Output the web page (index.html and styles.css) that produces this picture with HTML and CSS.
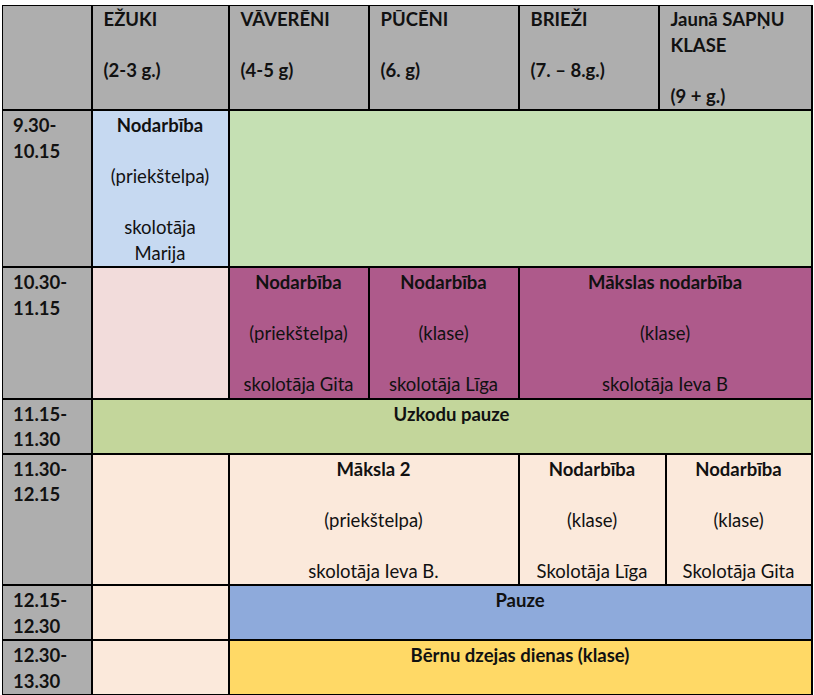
FILE: index.html
```html
<!DOCTYPE html>
<html lang="lv">
<head>
<meta charset="utf-8">
<title>Nodarbību grafiks</title>
<link rel="stylesheet" href="styles.css">
</head>
<body>
<table class="sched">
  <colgroup>
    <col class="c-time">
    <col class="c-ezuki">
    <col class="c-vav">
    <col class="c-puc">
    <col class="c-brie">
    <col class="c-gap">
    <col class="c-jauna">
  </colgroup>
  <tr class="head">
    <td class="grey"></td>
    <td class="grey hd"><p>EŽUKI</p><p class="sp">(2-3 g.)</p></td>
    <td class="grey hd"><p>VĀVERĒNI</p><p class="sp">(4-5 g)</p></td>
    <td class="grey hd"><p>PŪCĒNI</p><p class="sp">(6. g)</p></td>
    <td class="grey hd"><p>BRIEŽI</p><p class="sp">(7. – 8.g.)</p></td>
    <td class="grey hd" colspan="2"><p>Jaunā SAPŅU<br>KLASE</p><p class="sp">(9 + g.)</p></td>
  </tr>
  <tr>
    <td class="grey time">9.30-<br>10.15</td>
    <td class="blue act"><p class="b">Nodarbība</p><p class="sp">(priekštelpa)</p><p class="sp">skolotāja<br>Marija</p></td>
    <td class="green" colspan="5"></td>
  </tr>
  <tr>
    <td class="grey time">10.30-<br>11.15</td>
    <td class="pink"></td>
    <td class="purple act"><p class="b">Nodarbība</p><p class="sp">(priekštelpa)</p><p class="sp">skolotāja Gita</p></td>
    <td class="purple act"><p class="b">Nodarbība</p><p class="sp">(klase)</p><p class="sp">skolotāja Līga</p></td>
    <td class="purple act" colspan="3"><p class="b">Mākslas nodarbība</p><p class="sp">(klase)</p><p class="sp">skolotāja Ieva B</p></td>
  </tr>
  <tr>
    <td class="grey time">11.15-<br>11.30</td>
    <td class="olive act" colspan="6"><p class="b">Uzkodu pauze</p></td>
  </tr>
  <tr>
    <td class="grey time">11.30-<br>12.15</td>
    <td class="peach"></td>
    <td class="peach act" colspan="2"><p class="b">Māksla 2</p><p class="sp">(priekštelpa)</p><p class="sp">skolotāja Ieva B.</p></td>
    <td class="peach act" colspan="2"><p class="b">Nodarbība</p><p class="sp">(klase)</p><p class="sp">Skolotāja Līga</p></td>
    <td class="peach act"><p class="b">Nodarbība</p><p class="sp">(klase)</p><p class="sp">Skolotāja Gita</p></td>
  </tr>
  <tr>
    <td class="grey time">12.15-<br>12.30</td>
    <td class="peach"></td>
    <td class="sky act" colspan="5"><p class="b">Pauze</p></td>
  </tr>
  <tr>
    <td class="grey time">12.30-<br>13.30</td>
    <td class="peach"></td>
    <td class="yellow act" colspan="5"><p class="b">Bērnu dzejas dienas (klase)</p></td>
  </tr>
</table>
</body>
</html>
```

FILE: styles.css
```css
html, body {
  margin: 0;
  padding: 0;
  background: #ffffff;
}

body {
  padding: 5px 0 0 2px;
  font-family: Lato, "Open Sans", sans-serif;
  font-size: 18.5px;
  line-height: 25.5px;
  color: #111111;
}

.sched {
  border-collapse: collapse;
  table-layout: fixed;
  width: 809px;
}

.c-time { width: 89px; }
.c-ezuki { width: 137px; }
.c-vav { width: 140px; }
.c-puc { width: 150px; }
.c-brie { width: 140px; }
.c-gap { width: 7px; }
.c-jauna { width: 146px; }

.sched td {
  border: 2px solid #000000;
  vertical-align: top;
  padding: 2px 4px 0;
}

.sched tr.head td {
  padding-top: 1px;
  border-top-width: 1px;
}

.sched td:first-child {
  border-left-width: 1px;
}

.sched p {
  margin: 0;
}

.sched p.sp {
  margin-top: 25.5px;
}

.hd {
  font-weight: 700;
  text-align: left;
  padding-left: 11px !important;
}

.time {
  font-weight: 700;
  padding-left: 10px !important;
}

.act {
  text-align: center;
}

.b {
  font-weight: 700;
}

.grey { background: #aeaeae; }
.blue { background: #c6d9f1; }
.green { background: #c5e0b3; }
.pink { background: #f2dcdb; }
.purple { background: #ae5a8b; }
.olive { background: #c3d69b; }
.peach { background: #fbe9db; }
.sky { background: #8eaadb; }
.yellow { background: #ffd966; }
```
